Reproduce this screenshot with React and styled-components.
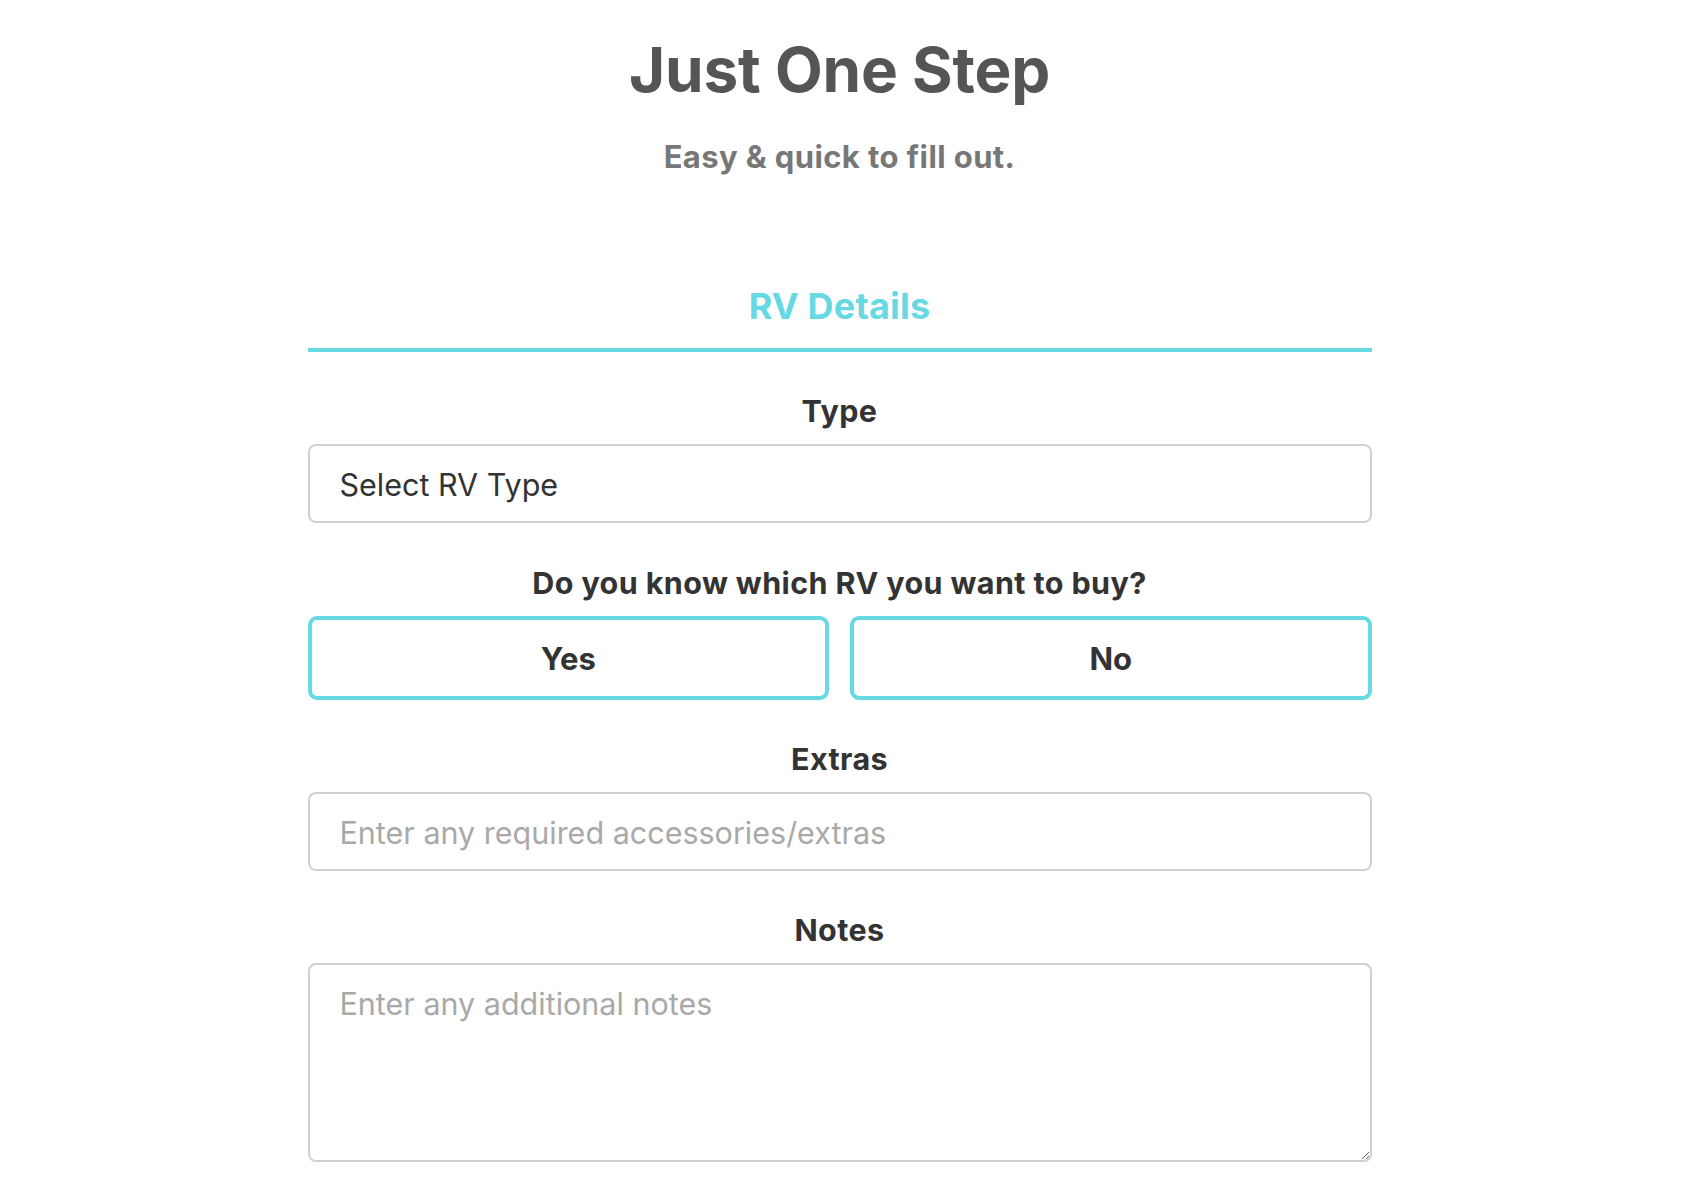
import React from "react";
import styled, { createGlobalStyle } from "styled-components";

const GlobalStyle = createGlobalStyle`
  html, body {
    margin: 0;
    padding: 0;
    background: #ffffff;
  }
  body {
    font-family: Inter, "Noto Sans", "Liberation Sans", sans-serif;
    color: #333333;
  }
  * { box-sizing: border-box; }
`;

const Page = styled.main`
  padding: 32px 15px 40px 0;
`;

const Header = styled.header`
  display: flex;
  flex-direction: column;
  align-items: center;
`;

const Title = styled.h1`
  margin: 0;
  font-size: 62px;
  line-height: 1.24;
  font-weight: 700;
  color: #555555;
  letter-spacing: -0.2px;
`;

const Subtitle = styled.p`
  margin: 29px 0 0;
  font-size: 31px;
  line-height: 1.2;
  font-weight: 700;
  color: #777777;
  letter-spacing: 0.4px;
`;

const Form = styled.form`
  width: 1064px;
  margin: 110px auto 0;
  display: flex;
  flex-direction: column;
`;

const SectionTitle = styled.h2`
  margin: 0;
  padding-bottom: 20px;
  border-bottom: 4px solid #66d9e3;
  text-align: center;
  font-size: 36px;
  line-height: 1.2;
  font-weight: 700;
  color: #66d9e3;
  letter-spacing: 0.2px;
`;

const Field = styled.div`
  display: flex;
  flex-direction: column;
  margin-top: ${(p) => p.$gap || 42}px;
`;

const Label = styled.label`
  display: block;
  text-align: center;
  font-size: 30.5px;
  line-height: 1.18;
  font-weight: 700;
  color: #333333;
  letter-spacing: 0.4px;
  margin-bottom: 15px;
`;

const controlBase = `
  width: 100%;
  border: 2px solid #d0d0d0;
  border-radius: 8px;
  background: #ffffff;
  font-family: Inter, "Noto Sans", "Liberation Sans", sans-serif;
  font-size: 30.5px;
  line-height: 1.2;
  color: #333333;
  outline: none;
`;

const Select = styled.select`
  ${controlBase}
  height: 79px;
  padding: 4px 30px 0;
  appearance: none;
  -webkit-appearance: none;
`;

const Input = styled.input`
  ${controlBase}
  height: 79px;
  padding: 2px 30px 0;
  &::placeholder { color: #a9a9a9; }
`;

const TextArea = styled.textarea`
  ${controlBase}
  height: 199px;
  padding: 21px 30px;
  resize: vertical;
  &::placeholder { color: #a9a9a9; }
`;

const Choices = styled.div`
  display: grid;
  grid-template-columns: 1fr 1fr;
  gap: 21px;
`;

const Choice = styled.button`
  height: 84px;
  padding: 1px 0 0;
  border: 4px solid #66d9e3;
  border-radius: 9px;
  background: #ffffff;
  font-family: Inter, "Noto Sans", "Liberation Sans", sans-serif;
  font-size: 31px;
  font-weight: 700;
  color: #333333;
  cursor: pointer;
`;

export default function App() {
  return (
    <>
      <GlobalStyle />
      <Page>
        <Header>
          <Title>Just One Step</Title>
          <Subtitle>Easy &amp; quick to fill out.</Subtitle>
        </Header>
        <Form onSubmit={(e) => e.preventDefault()}>
          <SectionTitle>RV Details</SectionTitle>
          <Field $gap={41}>
            <Label htmlFor="rv-type">Type</Label>
            <Select id="rv-type" defaultValue="">
              <option value="">Select RV Type</option>
              <option value="class-a">Class A</option>
              <option value="class-b">Class B</option>
              <option value="class-c">Class C</option>
              <option value="travel-trailer">Travel Trailer</option>
              <option value="fifth-wheel">Fifth Wheel</option>
            </Select>
          </Field>
          <Field $gap={42}>
            <Label as="div">Do you know which RV you want to buy?</Label>
            <Choices>
              <Choice type="button">Yes</Choice>
              <Choice type="button">No</Choice>
            </Choices>
          </Field>
          <Field $gap={41}>
            <Label htmlFor="extras">Extras</Label>
            <Input id="extras" placeholder="Enter any required accessories/extras" />
          </Field>
          <Field $gap={41}>
            <Label htmlFor="notes">Notes</Label>
            <TextArea id="notes" placeholder="Enter any additional notes" />
          </Field>
        </Form>
      </Page>
    </>
  );
}
